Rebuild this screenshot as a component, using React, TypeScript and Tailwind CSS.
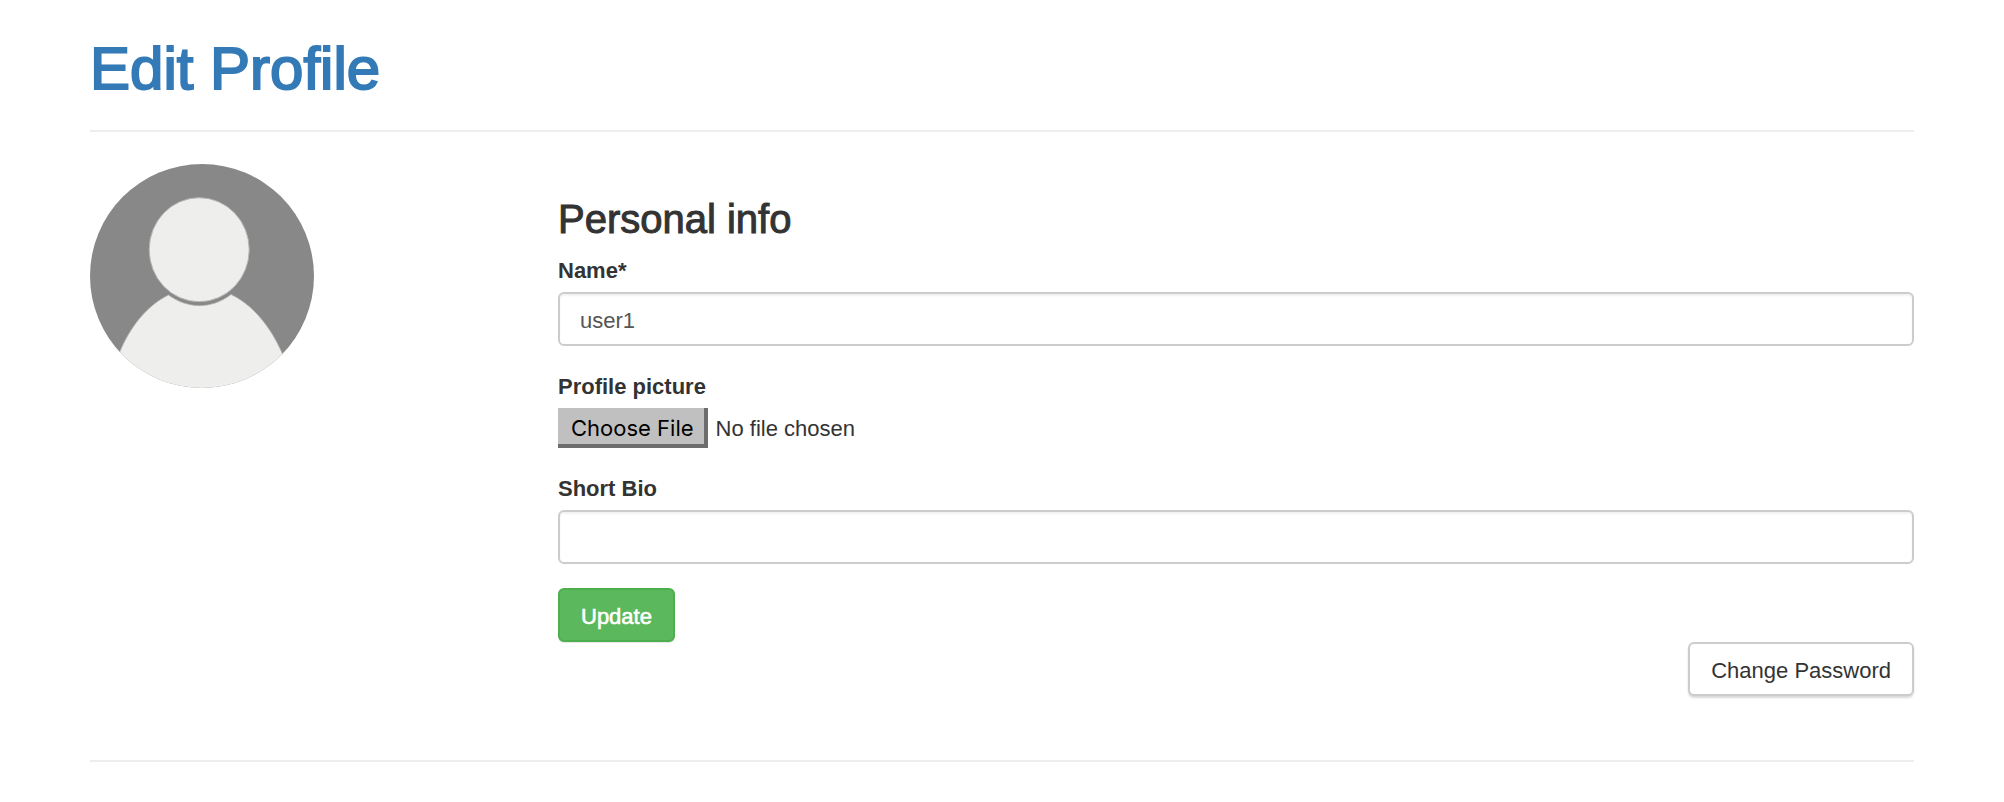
import React from 'react';

function Avatar() {
  return (
    <svg viewBox="0 0 224 224" className="size-56" role="img" aria-label="Profile avatar">
      <defs>
        <clipPath id="avatar-circle">
          <circle cx="112" cy="112" r="112" />
        </clipPath>
      </defs>
      <g clipPath="url(#avatar-circle)">
        <rect width="224" height="224" fill="#888888" />
        <path
          d="M78.5 131C58 141 40 162 29 190L12 234H210L193 191C181 163 163 141 141 130.500C121 145.500 98 145 78.500 131Z"
          fill="#eeeeec"
          stroke="#b4b4b3"
          strokeWidth="0.8"
        />
        <ellipse cx="109.200" cy="85.700" rx="50" ry="52" fill="#eeeeec" stroke="#b4b4b3" strokeWidth="1" />
      </g>
    </svg>
  );
}

const labelClass = 'mb-1 block text-[22px] leading-[34px] font-bold';
const inputClass =
  'block h-[54px] w-full rounded-md border-2 border-[#cccccc] bg-white px-5 pt-[3px] text-[22px] text-[#555555] shadow-[inset_0_2px_2px_rgba(0,0,0,0.055)] outline-none focus:border-[#66afe9]';
const buttonClass = 'h-[54px] rounded-md border-2 px-[21px] pt-[3px] text-[22px] leading-8';

export default function App() {
  return (
    <main className="min-h-screen bg-white px-[90px] pt-[38px] font-['Liberation_Sans',Arial,sans-serif] text-[#333333]">
      <h1 className="mb-[30px] text-[60px] leading-[62px] text-[#337ab7] [-webkit-text-stroke:2px_#337ab7]">
        Edit Profile
      </h1>
      <hr className="border-t-2 border-[#eeeeee]" />
      <div className="-mx-6 grid grid-cols-4 pt-8 pb-16">
        <div className="px-6">
          <Avatar />
        </div>
        <section className="col-span-3 px-6 pt-8">
          <h3 className="mb-3 text-[40px] leading-[46px] [-webkit-text-stroke:1px_#333333]">Personal info</h3>
          <form onSubmit={(event) => event.preventDefault()}>
            <div className="mb-6">
              <label htmlFor="name" className={labelClass}>
                Name*
              </label>
              <input id="name" type="text" defaultValue="user1" className={inputClass} />
            </div>
            <div className="mb-6">
              <label htmlFor="picture" className={labelClass}>
                Profile picture
              </label>
              <input
                id="picture"
                type="file"
                className="block h-10 w-full text-[22px] leading-8 file:mr-2 file:h-10 file:border-t-0 file:border-r-4 file:border-b-4 file:border-l-0 file:border-solid file:border-[#6d6d6d] file:bg-[#c0c0c0] file:pt-[3px] file:pr-2.5 file:pl-[13px] file:font-[Inter] file:text-[22px] file:text-black"
              />
            </div>
            <div className="mb-6">
              <label htmlFor="bio" className={labelClass}>
                Short Bio
              </label>
              <input id="bio" type="text" className={inputClass} />
            </div>
            <button
              type="submit"
              className={`${buttonClass} block border-[#4cae4c] bg-[#5cb85c] text-white shadow-[0_1px_1px_rgba(0,0,0,0.1)] [-webkit-text-stroke:0.6px_#ffffff]`}
            >
              Update
            </button>
          </form>
          <div className="flex justify-end">
            <button
              type="button"
              className={`${buttonClass} border-[#cccccc] bg-white shadow-[0_2px_2px_rgba(0,0,0,0.15)]`}
            >
              Change Password
            </button>
          </div>
        </section>
      </div>
      <hr className="border-t-2 border-[#eeeeee]" />
    </main>
  );
}
